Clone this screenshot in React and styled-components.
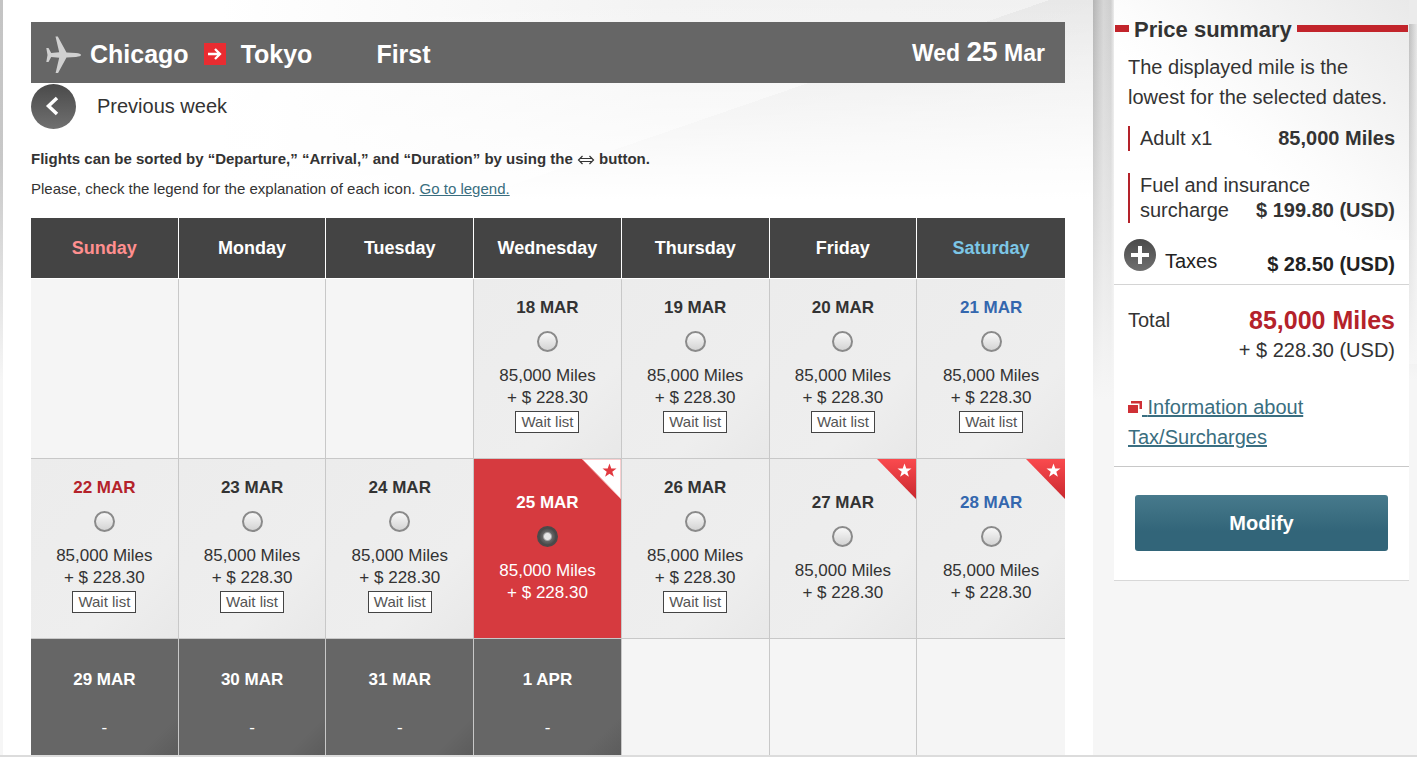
import React, { useState } from 'react';
import styled, { createGlobalStyle, css } from 'styled-components';

const GlobalStyle = createGlobalStyle`
* { box-sizing: border-box; }
body {
    margin: 0;
    background: #f6f6f6;
    color: #333;
    font-family: "Liberation Sans", Arial, sans-serif;
}
p, h1, h2, dl, dt, dd { margin: 0; }
button, input { font-family: inherit; }
`;

const Page = styled.div`
display: flex;
align-items: flex-start;
padding: 0 8px 0 3px;
border-bottom: 2px solid #dcdcdc;
background:
    linear-gradient(#ebebeb, #ebebeb) right top / 8px 24px no-repeat,
    linear-gradient(rgba(246,246,246,0), #f6f6f6) right 24px / 8px 340px no-repeat,
    linear-gradient(90deg, #bebebe, #e6e6e6) right top / 8px 364px no-repeat,
    linear-gradient(#c4c4c4, #c8c8c8 160px, #f6f6f6 380px);
`;

const Main = styled.main`
flex: 1;
min-width: 0;
padding: 22px 28px 0;
background:
    linear-gradient(rgba(255,255,255,0), #fff) right top / 100% 200px no-repeat,
    linear-gradient(161deg, transparent 48%, rgba(0,0,0,.04) 48%, transparent) right top / 620px 200px no-repeat,
    linear-gradient(90deg, #fff 20%, #f3f3f3 60%, #f1f1f1) right top / 100% 200px no-repeat,
    #fff;
`;

const Gutter = styled.div`
align-self: stretch;
width: 21px;
background:
    linear-gradient(rgba(246,246,246,0), #f6f6f6 400px),
    linear-gradient(90deg, #b4b4b4, #d6d6d6 50%, #cecece 85%, #ececec);
`;

const Banner = styled.header`
display: flex;
align-items: center;
height: 61px;
padding: 3px 20px 0 13px;
background: #666;
color: #fff;
font-size: 25px;
font-weight: bold;
`;

const Route = styled.h1`
display: flex;
align-items: center;
font-size: 25px;
`;

const Plane = styled.svg`
width: 38px;
height: 38px;
margin-right: 8px;
fill: #d0d0d0;
`;

const RouteArrow = styled.svg`
width: 22px;
height: 22px;
margin: 0 15px;
`;

const Cabin = styled.span`
margin-left: 64px;
`;

const FlightDate = styled.time`
margin-left: auto;
padding-bottom: 4px;
font-size: 23px;

strong { font-size: 28px; }
`;

const PreviousWeek = styled.button`
display: flex;
align-items: center;
gap: 21px;
margin: 1px 0 15px;
padding: 0;
border: 0;
background: none;
color: #333;
font-size: 20px;
cursor: pointer;

svg { width: 45px; height: 45px; }
`;

const Note = styled.p`
font-size: 15px;
line-height: 30px;
font-weight: ${props => props.$bold ? 'bold' : 'normal'};
`;

const SortMark = styled.svg`
width: 18px;
height: 12px;
vertical-align: -2px;
fill: none;
stroke: #333;
`;

const Link = styled.a`
color: #3a6e80;
`;

const Calendar = styled.table`
width: 100%;
margin-top: 14px;
table-layout: fixed;
border-collapse: separate;
border-spacing: 0;
`;

const dayColors = {
    Sunday: '#ff8f8f',
    Saturday: '#7cc6e6'
};

const Weekday = styled.th`
height: 61px;
padding: 1px 0 0;
border-right: 1px solid #fff;
border-bottom: 1px solid #fff;
background: #444;
color: ${props => dayColors[props.$day] || '#fff'};
font-size: 18px;

&:last-child { border-right: 0; }
`;

const kinds = {
    empty: css`background: #f5f5f5;`,
    open: css`background: linear-gradient(135deg, #ececec, #eee 70%, #e8e8e8);`,
    selected: css`background: #d63a3f; color: #fff;`,
    closed: css`
        padding-top: 30px;
        background: linear-gradient(135deg, #666 85%, #5c5c5c);
        color: #fff;
        vertical-align: top;
    `
};

const Cell = styled.td`
position: relative;
height: 180px;
padding: 0 0 2px;
border-right: 1px solid #c8c8c8;
border-bottom: 1px solid #c8c8c8;
font-size: 17px;
line-height: 22px;
text-align: center;
vertical-align: middle;
${props => kinds[props.$kind]}

&:last-child { border-right: 0; }
tr:last-child > & { height: 116px; border-bottom: 0; }
`;

const dateColors = {
    red: '#b4222a',
    blue: '#3467ae'
};

const DateLabel = styled.label`
display: block;
color: ${props => dateColors[props.$tone] || 'inherit'};
font-weight: bold;
`;

const Radio = styled.input`
display: block;
appearance: none;
width: 21px;
height: 21px;
margin: 12px auto 13px;
border: 2px solid #8a8a8a;
border-radius: 50%;
background: linear-gradient(#f8f8f8, #d4d4d4);

&:checked {
    border-color: #4a4a4a;
    background: radial-gradient(circle, #e6e6e6 3px, #666 5px, #444 9px);
}
`;

const WaitList = styled.span`
display: inline-block;
height: 22px;
margin: 2px 0 5px;
padding: 0 5px;
border: 1px solid #444;
background: #fff;
color: #555;
font-size: 15px;
line-height: 20px;
vertical-align: top;
`;

const Dash = styled.div`
margin-top: 26px;
`;

const Corner = styled.svg`
position: absolute;
top: 0;
right: 0;
width: 40px;
height: 40px;
`;

const Summary = styled.aside`
width: 295px;
border-bottom: 1px solid #d8d8d8;
background: linear-gradient(to bottom left, #e9e9e9, #fcfcfc 50%, #fff 60%) top / 100% 240px no-repeat, #fff;
`;

const SummaryTitle = styled.h2`
display: flex;
align-items: center;
gap: 5px;
padding: 16px 1px 0;
font-size: 22px;
line-height: 28px;
white-space: nowrap;

&::before, &::after {
    content: "";
    width: 14px;
    height: 7px;
    margin-bottom: 3px;
    background: #c2242b;
}
&::after { flex: 1; }
`;

const SummaryText = styled.p`
padding: 8px 14px 14px;
font-size: 20px;
line-height: 30px;
`;

const Charges = styled.dl`
padding-bottom: 7px;
border-bottom: 1px solid #d4d4d4;
font-size: 20px;
line-height: 25px;
`;

const Charge = styled.div`
display: flex;
align-items: flex-end;
justify-content: space-between;
margin: 0 14px 22px;
padding-left: 10px;
border-left: 2px solid #b4222a;

dt { flex: 1; min-width: 0; white-space: pre; }
dd { font-weight: bold; white-space: nowrap; }
`;

const TaxCharge = styled(Charge)`
align-items: center;
margin: -13px 14px 0 10px;
padding: 0;
border: 0;
color: #222;

dt { display: flex; align-items: center; gap: 9px; }
dt span { padding-top: 14px; }
dd { padding-top: 20px; }
`;

const Expand = styled.button`
width: 32px;
height: 32px;
padding: 0;
border: 0;
background: none;
cursor: pointer;

svg { display: block; width: 32px; height: 32px; }
`;

const Total = styled.div`
display: flex;
justify-content: space-between;
padding: 20px 14px 27px;
font-size: 20px;
line-height: 30px;
text-align: right;

strong {
    display: block;
    color: #b4222a;
    font-size: 25px;
}
`;

const TaxInfo = styled.div`
padding: 0 14px 14px;
border-bottom: 1px solid #c8c8c8;
font-size: 20px;
line-height: 30px;

svg { width: 14px; height: 14px; vertical-align: 0; }
`;

const Actions = styled.div`
padding: 28px 21px 29px;
`;

const Modify = styled.button`
display: block;
width: 100%;
height: 56px;
border: 0;
border-radius: 3px;
background: linear-gradient(#477a8c, #326579 65%);
color: #fff;
font-size: 20px;
font-weight: bold;
cursor: pointer;
`;

const weekdays = ['Sunday', 'Monday', 'Tuesday', 'Wednesday', 'Thursday', 'Friday', 'Saturday'];

const weeks = [
    [
        null, null, null,
        { date: '18 MAR', wait: true },
        { date: '19 MAR', wait: true },
        { date: '20 MAR', wait: true },
        { date: '21 MAR', wait: true, tone: 'blue' }
    ],
    [
        { date: '22 MAR', wait: true, tone: 'red' },
        { date: '23 MAR', wait: true },
        { date: '24 MAR', wait: true },
        { date: '25 MAR', star: true },
        { date: '26 MAR', wait: true },
        { date: '27 MAR', star: true },
        { date: '28 MAR', star: true, tone: 'blue' }
    ],
    [
        { date: '29 MAR', closed: true },
        { date: '30 MAR', closed: true },
        { date: '31 MAR', closed: true },
        { date: '1 APR', closed: true },
        null, null, null
    ]
];

function Ribbon({ inverted }) {
    return (
        <Corner viewBox="0 0 40 40" aria-hidden="true">
            <defs>
                <linearGradient id="ribbon" x1="0" y1="0" x2="0" y2="1">
                    <stop offset="0" stopColor="#fa4a4e" />
                    <stop offset="1" stopColor="#c9282e" />
                </linearGradient>
            </defs>
            <path
                d="M1 0H40V40Z"
                fill={inverted ? '#fff' : 'url(#ribbon)'}
                stroke={inverted ? '#f3a0a2' : 'none'}
            />
            <path
                d="M28.500 4.500l1.800 5h5.200l-4.200 3.200 1.600 5.100-4.400-3.100-4.400 3.100 1.600-5.100-4.200-3.200h5.200z"
                fill={inverted ? '#e2393f' : '#fff'}
            />
        </Corner>
    );
}

function Day({ day, selected, onSelect }) {
    if (!day) {
        return <Cell $kind="empty" />;
    }
    if (day.closed) {
        return (
            <Cell $kind="closed">
                <DateLabel as="div">{day.date}</DateLabel>
                <Dash>-</Dash>
            </Cell>
        );
    }
    const id = day.date.replace(' ', '-');
    return (
        <Cell $kind={selected ? 'selected' : 'open'}>
            {day.star && <Ribbon inverted={selected} />}
            <DateLabel htmlFor={id} $tone={selected ? null : day.tone}>{day.date}</DateLabel>
            <Radio type="radio" name="day" id={id} checked={selected} onChange={() => onSelect(day.date)} />
            <div>85,000 Miles</div>
            <div>+ $ 228.30</div>
            {day.wait && <WaitList>Wait list</WaitList>}
        </Cell>
    );
}

function App() {
    const [selected, setSelected] = useState('25 MAR');

    return (
        <>
            <GlobalStyle />
            <Page>
                <Main>
                    <Banner>
                        <Route>
                            <Plane viewBox="0 0 38 38" aria-hidden="true">
                                <path d="M11.500 1.500h2.300l8.700 16 9.500.6c3 .3 5 .9 5 1.900s-2 1.600-5 1.900l-9.500.6-8.700 16h-2.300l3.700-15.800-8-.7L4.500 27H2.300l1.200-7-1.200-7h2.200l2.700 5 8-.7z" />
                            </Plane>
                            Chicago
                            <RouteArrow viewBox="0 0 22 22" role="img" aria-label="to">
                                <rect width="22" height="22" fill="#e92c31" />
                                <path d="M4 11h12M11 6l5 5-5 5" fill="none" stroke="#fff" strokeWidth="2.300" />
                            </RouteArrow>
                            Tokyo
                        </Route>
                        <Cabin>First</Cabin>
                        <FlightDate>Wed <strong>25</strong> Mar</FlightDate>
                    </Banner>
                    <PreviousWeek>
                        <svg viewBox="0 0 45 45" aria-hidden="true">
                            <defs>
                                <linearGradient id="disc" x1="0" y1="0" x2="0" y2="1">
                                    <stop offset="0" stopColor="#4a4a4a" />
                                    <stop offset="1" stopColor="#707070" />
                                </linearGradient>
                            </defs>
                            <circle cx="22.500" cy="22.500" r="22.500" fill="url(#disc)" />
                            <path d="M26 14l-8.500 8 8.500 8" fill="none" stroke="#fff" strokeWidth="3.500" />
                        </svg>
                        Previous week
                    </PreviousWeek>
                    <Note $bold>
                        Flights can be sorted by “Departure,” “Arrival,” and “Duration” by using the{' '}
                        <SortMark viewBox="0 0 18 12" role="img" aria-label="sort">
                            <path d="M3.500 4.500h11M3.500 7.500h11M5.500 2L1.500 6l4 4M12.500 2l4 4-4 4" strokeWidth="1.200" />
                        </SortMark>{' '}
                        button.
                    </Note>
                    <Note>
                        Please, check the legend for the explanation of each icon. <Link href="#legend">Go to legend.</Link>
                    </Note>
                    <Calendar>
                        <thead>
                            <tr>
                                {weekdays.map(day => <Weekday key={day} $day={day}>{day}</Weekday>)}
                            </tr>
                        </thead>
                        <tbody>
                            {weeks.map((week, i) => (
                                <tr key={i}>
                                    {week.map((day, j) => (
                                        <Day
                                            key={j}
                                            day={day}
                                            selected={!!day && day.date === selected}
                                            onSelect={setSelected}
                                        />
                                    ))}
                                </tr>
                            ))}
                        </tbody>
                    </Calendar>
                </Main>
                <Gutter />
                <Summary>
                    <SummaryTitle>Price summary</SummaryTitle>
                    <SummaryText>The displayed mile is the lowest for the selected dates.</SummaryText>
                    <Charges>
                        <Charge>
                            <dt>Adult x1</dt>
                            <dd>85,000 Miles</dd>
                        </Charge>
                        <Charge>
                            <dt>{'Fuel and insurance\nsurcharge'}</dt>
                            <dd>$ 199.80 (USD)</dd>
                        </Charge>
                        <TaxCharge>
                            <dt>
                                <Expand aria-label="Show taxes">
                                    <svg viewBox="0 0 32 32">
                                        <circle cx="16" cy="16" r="16" fill="url(#disc)" />
                                        <path d="M16 7v18M7 16h18" stroke="#fff" strokeWidth="4" />
                                    </svg>
                                </Expand>
                                <span>Taxes</span>
                            </dt>
                            <dd>$ 28.50 (USD)</dd>
                        </TaxCharge>
                    </Charges>
                    <Total>
                        <span>Total</span>
                        <div>
                            <strong>85,000 Miles</strong>
                            + $ 228.30 (USD)
                        </div>
                    </Total>
                    <TaxInfo>
                        <Link href="#tax">
                            <svg viewBox="0 0 14 14" aria-hidden="true">
                                <path d="M3 1h11v8h-2.500V3.500H3z" fill="#cf3036" />
                                <path d="M0 5h10v8H0z" fill="#cf3036" />
                            </svg>
                            {' '}Information about Tax/Surcharges
                        </Link>
                    </TaxInfo>
                    <Actions>
                        <Modify>Modify</Modify>
                    </Actions>
                </Summary>
            </Page>
        </>
    );
}

export default App;
